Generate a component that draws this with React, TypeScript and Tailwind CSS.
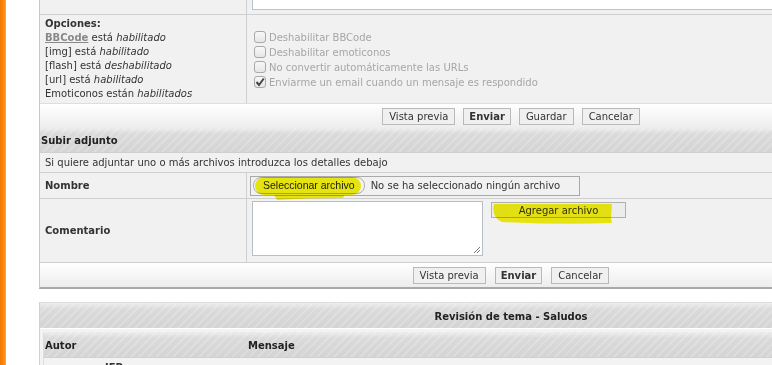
import React from "react";

const hdr =
  "bg-[repeating-linear-gradient(135deg,rgba(255,255,255,0.18)_0px,rgba(255,255,255,0.18)_2px,rgba(0,0,0,0)_2px,rgba(0,0,0,0)_6px),linear-gradient(to_bottom,#ececec_0%,#dadada_25%,#d4d4d4_100%)]";

function Btn({ children, bold }: { children: React.ReactNode; bold?: boolean }) {
  return (
    <span
      className={`inline-flex items-center justify-center h-[17px] border border-[#b9b9b9] bg-[#f0f0f0] text-[10px] text-[#333] ${
        bold ? "font-bold px-[5px]" : "px-[6px]"
      }`}
    >
      {children}
    </span>
  );
}

function Check({ checked }: { checked?: boolean }) {
  return (
    <span className="inline-flex w-[12px] h-[12px] mr-[3px] rounded-[3px] border border-[#a9a9a9] bg-[linear-gradient(to_bottom,#f8f8f8,#e6e6e6)] items-center justify-center shrink-0">
      {checked && (
        <svg width="10" height="10" viewBox="0 0 10 10">
          <path d="M1.5 5 L4 8 L8.8 1.5" stroke="#444" strokeWidth="2" fill="none" />
        </svg>
      )}
    </span>
  );
}

export default function App() {
  return (
    <div className="relative w-[772px] h-[365px] overflow-hidden bg-white flex font-['DejaVu_Sans',Verdana,sans-serif] text-[10px] text-[#333]">
      <div className="w-[6px] shrink-0 bg-[linear-gradient(to_right,#f07800,#ff8a12_70%,#ffa64a)]" />
      <div className="w-[33px] shrink-0" />
      <div className="w-[943px] shrink-0 flex flex-col">
        {/* panel 1 */}
        <div className="border-l border-[#c8c8c8] border-b-2 border-b-[#a9a9a9] bg-[#f1f1f1]">
          {/* tail of message row */}
          <div className="flex h-[15px] border-b border-[#cfcfcf]">
            <div className="w-[207px] border-r border-[#cfcfcf]" />
            <div className="flex-1 pl-[5px]">
              <div className="h-[10px] w-[700px] bg-white border-l border-b border-[#b8c3cf]" />
            </div>
          </div>
          {/* options */}
          <div className="flex h-[89px] border-b border-[#dedede]">
            <div className="w-[207px] border-r border-[#cfcfcf] pl-[5px] pt-[2px] leading-[14px]">
              <div className="font-bold">Opciones:</div>
              <div>
                <span className="font-bold text-[#888] underline">BBCode</span> está <i>habilitado</i>
              </div>
              <div>
                [img] está <i>habilitado</i>
              </div>
              <div>
                [flash] está <i>deshabilitado</i>
              </div>
              <div>
                [url] está <i>habilitado</i>
              </div>
              <div>
                Emoticonos están <i>habilitados</i>
              </div>
            </div>
            <div className="flex-1 flex flex-col justify-center pl-[7px] text-[#a6a6a6] pt-[1px]">
              <div className="h-[15px] flex items-center">
                <Check />
                Deshabilitar BBCode
              </div>
              <div className="h-[15px] flex items-center">
                <Check />
                Deshabilitar emoticonos
              </div>
              <div className="h-[15px] flex items-center">
                <Check />
                No convertir automáticamente las URLs
              </div>
              <div className="h-[15px] flex items-center">
                <Check checked />
                Enviarme un email cuando un mensaje es respondido
              </div>
            </div>
          </div>
          {/* buttons */}
          <div className="h-[24px] flex items-center justify-center gap-[8px] bg-[linear-gradient(to_bottom,#ffffff,#ededed)]">
            <Btn>Vista previa</Btn>
            <Btn bold>Enviar</Btn>
            <Btn>Guardar</Btn>
            <Btn>Cancelar</Btn>
          </div>
          {/* Subir adjunto header */}
          <div className={`h-[25px] flex items-center pl-[1px] pt-[1px] font-bold text-[#222] border-b border-[#cfcfcf] ${hdr}`}>
            Subir adjunto
          </div>
          <div className="h-[20px] flex items-center pl-[5px] border-b border-[#cfcfcf]">
            Si quiere adjuntar uno o más archivos introduzca los detalles debajo
          </div>
          {/* Nombre */}
          <div className="flex h-[26px] border-b border-[#cfcfcf]">
            <div className="w-[207px] border-r border-[#cfcfcf] pl-[5px] flex items-center font-bold">Nombre</div>
            <div className="flex-1 pl-[3px] flex items-center">
              <div className="h-[20px] w-[330px] border border-[#a9a9a9] flex items-center pl-[2px]">
                <span className="h-[17px] px-[9px] rounded-[8px] border border-[#b0b0b0] flex items-center font-['Liberation_Sans',Arial,sans-serif] text-[10.5px] text-[#222]">
                  Seleccionar archivo
                </span>
                <span className="ml-[6px]">No se ha seleccionado ningún archivo</span>
              </div>
            </div>
          </div>
          {/* Comentario */}
          <div className="flex h-[64px] border-b border-[#cfcfcf]">
            <div className="w-[207px] border-r border-[#cfcfcf] pl-[5px] flex items-center font-bold">Comentario</div>
            <div className="flex-1 pl-[5px] pt-[2px] flex items-start">
              <div className="relative w-[231px] h-[55px] bg-white border border-[#b8bec6]">
                <svg className="absolute right-[1px] bottom-[1px]" width="9" height="9" viewBox="0 0 9 9">
                  <path d="M8 2 L2 8 M8 5 L5 8" stroke="#777" strokeWidth="1" />
                </svg>
              </div>
              <span className="ml-[8px] mt-[1px] h-[16px] w-[135px] border border-[#b0b0b0] bg-[#ececec] flex items-center justify-center">
                Agregar archivo
              </span>
            </div>
          </div>
          {/* buttons */}
          <div className="h-[24px] flex items-center justify-center gap-[9px] bg-[linear-gradient(to_bottom,#ffffff,#ededed)]">
            <Btn>Vista previa</Btn>
            <Btn bold>Enviar</Btn>
            <Btn>Cancelar</Btn>
          </div>
        </div>

        {/* panel 2 */}
        <div className="mt-[13px] border-l border-[#d0d0d0] bg-[#f3f3f3]">
          <div className={`h-[26px] flex items-center justify-center pt-[1px] font-bold text-[#222] border-t border-[#dcdcdc] ${hdr}`}>
            Revisión de tema - Saludos
          </div>
          <div className="h-[4px] border-t border-white bg-[#f3f3f3]" />
          <div className="pl-[3px]">
            <div className="border-l border-[#dddddd]">
              <div className={`h-[26px] flex items-center pt-[1px] font-bold text-[#222] border-b border-[#d0d0d0] ${hdr}`}>
                <div className="w-[204px] pl-[1px]">Autor</div>
                <div>Mensaje</div>
              </div>
              <div className="h-[20px] bg-[#f3f3f3] pl-[61px] pt-[2px] font-bold">JFP</div>
            </div>
          </div>
        </div>
      </div>

      {/* highlighter marks */}
      <svg
        className="absolute left-0 top-0 pointer-events-none mix-blend-multiply"
        width="772"
        height="365"
        viewBox="0 0 772 365"
      >
        <g fill="#f4f000" opacity="0.92">
          <rect x="255" y="177" width="106" height="18" rx="9" />
          <path d="M272 191 Q310 189 347 190 L343 198 Q305 198 277 200 Z" />
          <path d="M494 204 L612 204 L611 218 L612 223 Q560 225 502 222 Q491 217 494 204 Z" />
        </g>
      </svg>
    </div>
  );
}
